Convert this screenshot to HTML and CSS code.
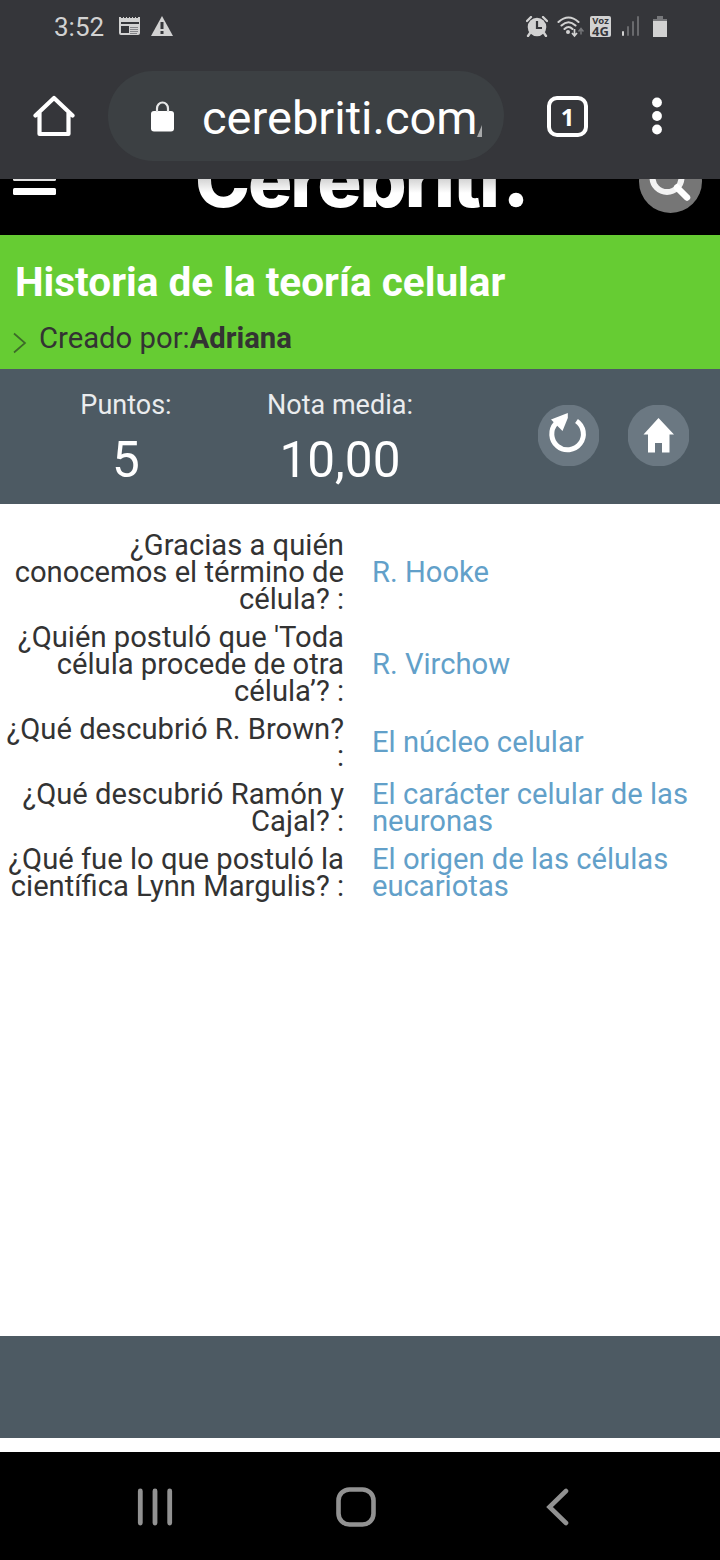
FILE: index.html
```
<!DOCTYPE html>
<html lang="es">
<head>
<meta charset="utf-8">
<title>Historia de la teoría celular</title>
<link rel="stylesheet" href="styles.css">
</head>
<body>
<div class="screen">
  <div class="status">
    <span class="clock">3:52</span>
    <svg class="ic-news" width="22" height="20" viewBox="0 0 22 20"><path fill="#d2d2d2" fill-rule="evenodd" d="M0 1h2v1h2V1h1v1h2V1h1v1h2V1h1v1h2V1h1v1h2V1h1v1h2V1h2v16q0 2-2 2H2q-2 0-2-2zM2 6v2h18V6zM2 10v7h8v-7z"/><path stroke="#85868a" d="M11 11.5h8M11 13.5h8M11 15.5h8M11 17.5h7"/></svg>
    <svg class="ic-warn" width="22" height="20" viewBox="0 0 22 20"><path d="M11 0l11 20H0z" fill="#d2d2d2"/><path d="M11 6v7M11 15v3" stroke="#35363a" stroke-width="3"/></svg>
    <svg class="ic-alarm" width="22" height="21" viewBox="0 0 22 21"><circle cx="11" cy="11" r="9.3" fill="#d2d2d2"/><path d="M1 5l4-4M21 5l-4-4M4 17l-2 3M18 17l2 3" stroke="#d2d2d2" stroke-width="2.3" stroke-linecap="round"/><path d="M11 5v7h5" fill="none" stroke="#35363a" stroke-width="2.2"/></svg>
    <svg class="ic-wifi" width="27" height="22" viewBox="0 0 27 22"><g fill="none" stroke="#d2d2d2" stroke-width="2.1" stroke-linecap="round"><path d="M1.500 6Q11.500-3 21.500 6M4.500 9.500Q11.500 3 18.500 9.500M7.500 13Q11.500 9 15.500 13"/></g><circle cx="11" cy="16" r="2" fill="#d2d2d2"/><path d="M17.500 13v7m-2.500-3l2.500 3 2.500-3" fill="none" stroke="#d2d2d2" stroke-width="1.700"/><path d="M24 18.500v-6m-2.500 3l2.500-3 2.500 3" fill="none" stroke="#76777a" stroke-width="1.500"/></svg>
    <div class="volte"><span class="voz">Voz</span><span class="g4">4G</span></div>
    <svg class="ic-signal" width="18" height="20" viewBox="0 0 18 20"><path stroke="#d2d2d2" stroke-width="2" stroke-linecap="round" d="M2 16v3"/><path stroke="#696a6d" stroke-width="2" stroke-linecap="round" d="M7 11v8M12 6v13M17 1v18"/></svg>
    <svg class="ic-batt" width="14" height="21" viewBox="0 0 14 21"><path d="M4 0h6v3h4v3H0V3h4z" fill="#77787b"/><path d="M0 5h14v16H0z" fill="#d2d2d2"/></svg>
  </div>
  <div class="toolbar">
    <svg class="ic-home" width="42" height="42" viewBox="0 0 42 42"><path d="M2.500 20.500L21 3l18.500 17.500M6.500 18v21h29V18" fill="none" stroke="#fff" stroke-width="4.200" stroke-linejoin="round" stroke-linecap="round"/></svg>
    <div class="url">
      <svg class="ic-lock" width="23" height="31" viewBox="0 0 23 31"><rect y="10" width="23" height="20.500" rx="3" fill="#fff"/><path d="M6 11V7.500a5.500 6 0 0 1 11 0V11" fill="none" stroke="#e8e9e9" stroke-width="2.200"/></svg>
      <span class="domain">cerebriti.com</span><svg class="slash" width="5" height="12" viewBox="0 0 5 12"><path d="M0 12L5 0v12z" fill="#a7a9aa"/></svg>
    </div>
    <div class="tabs">1</div>
    <svg class="ic-more" width="12" height="38" viewBox="0 0 12 38"><g fill="#fff"><circle cx="6" cy="5.500" r="4.900"/><circle cx="6" cy="19" r="4.900"/><circle cx="6" cy="32.500" r="4.900"/></g></svg>
  </div>
  <div class="sitebar">
    <svg class="burger" width="44" height="17" viewBox="0 0 44 17"><path d="M0 0h43v.5q0 1.500-1.500 1.500h-40Q0 2 0 .5z" fill="#e2e2e2"/><rect y="9" width="43" height="7" rx="1.500" fill="#fff"/></svg>
    <svg class="logo" width="340" height="56" viewBox="190 0 340 56"><defs><linearGradient id="lg" gradientUnits="userSpaceOnUse" x1="0" y1="0" x2="0" y2="14"><stop offset="0" stop-color="#d4d4d4"/><stop offset="1" stop-color="#fff"/></linearGradient></defs><text class="logotype" x="195" y="28" textLength="305" fill="url(#lg)">Cerebriti</text><circle cx="516" cy="21" r="7.300" fill="#fff"/></svg>
    <svg class="search" width="64" height="36" viewBox="0 0 64 36"><circle cx="31.500" cy="2.500" r="31.500" fill="#767676"/><circle cx="28" cy="-1.500" r="14.500" fill="none" stroke="#f2f2f2" stroke-width="6"/><path d="M38 8.500l10 10" stroke="#fff" stroke-width="6.500" stroke-linecap="round"/></svg>
  </div>
  <div class="title">
    <h1>Historia de la teoría celular</h1>
    <div class="author"><svg width="14" height="22" viewBox="0 0 14 22"><path d="M1 1.500L12 11 1 20.500" fill="none" stroke="#3d6b29" stroke-width="1.700"/></svg><span class="by">Creado por:<b>Adriana</b></span></div>
  </div>
  <div class="stats">
    <div class="stat points"><span class="label">Puntos:</span><span class="value">5</span></div>
    <div class="stat mean"><span class="label">Nota media:</span><span class="value">10,00</span></div>
    <svg class="round" width="61" height="61" viewBox="0 0 61 61"><circle cx="30.500" cy="30.500" r="31" fill="#6b7882"/><path d="M38.500 16A15.800 15.800 0 1 1 18 18.300" fill="none" stroke="#fff" stroke-width="5"/><path d="M13 14.500L29.800 8V13L24.500 26z" fill="#fff"/></svg>
    <svg class="round" width="61" height="61" viewBox="0 0 61 61"><circle cx="30.500" cy="30.500" r="31" fill="#6b7882"/><path d="M30.500 13L46 29.500h-4.500V47.500h-7.500V38h-7v9.500h-7V29.500H15.500z" fill="#fff"/></svg>
  </div>
  <div class="answers">
    <div class="row"><div class="q">¿Gracias a quién<br>conocemos el término de<br>célula? :</div><div class="a">R. Hooke</div></div>
    <div class="row"><div class="q">¿Quién postuló que 'Toda<br>célula procede de otra<br>célula’? :</div><div class="a">R. Virchow</div></div>
    <div class="row"><div class="q">¿Qué descubrió R. Brown?<br>:</div><div class="a nudge">El núcleo celular</div></div>
    <div class="row"><div class="q">¿Qué descubrió Ramón y<br>Cajal? :</div><div class="a">El carácter celular de las<br>neuronas</div></div>
    <div class="row"><div class="q">¿Qué fue lo que postuló la<br>científica Lynn Margulis? :</div><div class="a">El origen de las células<br>eucariotas</div></div>
  </div>
  <div class="band"></div>
  <div class="navbar">
    <svg width="38" height="40" viewBox="0 0 38 40"><path d="M4.300 4v32M19 4v32M33.700 4v32" stroke="#929292" stroke-width="4.800" stroke-linecap="round"/></svg>
    <svg width="40" height="40" viewBox="0 0 40 40"><rect x="2.500" y="2.500" width="35" height="35" rx="11" fill="none" stroke="#929292" stroke-width="4.600"/></svg>
    <svg width="24" height="40" viewBox="0 0 24 40"><path d="M20 4L3.500 20 20 36" fill="none" stroke="#929292" stroke-width="4.600" stroke-linecap="round"/></svg>
  </div>
</div>
</body>
</html>
```

FILE: styles.css
```
body { margin: 0; background: #fff; font-family: Roboto, sans-serif; }
svg { display: block; flex: none; }
.screen { width: 720px; height: 1560px; display: flex; flex-direction: column; overflow: hidden; }
.screen > div { flex: none; box-sizing: border-box; }

.status { height: 60px; background: #35363a; display: flex; align-items: flex-start; padding: 16px 53px 0 54px; }
.clock { width: 65px; font-size: 26px; line-height: 22px; color: #d2d2d2; }
.ic-warn { margin-left: 10px; }
.ic-alarm { margin-left: 353px; }
.ic-wifi { margin-left: 9px; }
.volte { width: 21px; height: 21px; margin-left: 6px; border-radius: 2px; background: #d2d2d2; color: #35363a; display: flex; flex-direction: column; align-items: center; font-family: "Open Sans", sans-serif; font-weight: 700; }
.voz { font-size: 9.5px; line-height: 10px; }
.g4 { font-size: 13px; line-height: 11px; }
.ic-signal { margin-left: 10px; }
.ic-batt { margin-left: 14px; }

.toolbar { height: 119px; background: #35363a; display: flex; align-items: flex-start; padding: 11px 0 0 33px; }
.ic-home { margin-top: 24px; }
.url { width: 396px; height: 90px; margin-left: 33px; border-radius: 45px; background: #3c4043; display: flex; align-items: flex-start; box-sizing: border-box; padding-left: 43px; }
.ic-lock { margin-top: 30px; }
.domain { width: 276px; margin-left: 28px; font-size: 47px; line-height: 94px; color: #fff; white-space: nowrap; }
.slash { margin-top: 54px; margin-left: -1px; }
.tabs { width: 33px; height: 33px; margin: 25px 0 0 43px; border: 4px solid #fff; border-radius: 10px; color: #fff; font: 700 24px/33px "Noto Sans", sans-serif; text-align: center; }
.ic-more { margin: 26px 0 0 63px; }

.sitebar { height: 56px; background: #000; display: flex; align-items: flex-start; padding-left: 13px; overflow: hidden; }
.logo { margin-left: 133px; }
.logotype { font-family: Inter, sans-serif; font-weight: 800; font-size: 74px; }
.search { margin-left: 109px; }

.title { height: 134px; background: #66cc33; padding: 24px 0 0 13px; }
.title h1 { margin: 0 0 0 2px; font-size: 40.5px; line-height: 46px; font-weight: 700; color: #fff; white-space: nowrap; }
.author { display: flex; align-items: flex-start; height: 40px; margin-top: 15px; color: #333; }
.author svg { margin-top: 12px; }
.by { margin-left: 12px; font-size: 29.25px; line-height: 36px; white-space: nowrap; }

.stats { height: 135px; background: #4d5a63; display: flex; align-items: flex-start; padding-top: 20px; }
.stat { display: flex; flex-direction: column; align-items: center; white-space: nowrap; }
.points { width: 252px; }
.mean { width: 176px; }
.label { font-size: 27px; line-height: 32px; color: #eaecee; }
.value { font-size: 49.5px; line-height: 58px; margin-top: 10px; color: #fff; }
.round { margin-top: 16px; margin-right: 29px; }
.mean + .round { margin-left: 110px; }

.answers { height: 832px; padding-top: 28px; display: flex; flex-direction: column; gap: 11px; font-size: 29.2px; line-height: 27px; }
.row { display: grid; grid-template-columns: 344px 348px; column-gap: 28px; align-items: center; white-space: nowrap; }
.q { text-align: right; color: #333; }
.a { color: #62a0c9; }
.nudge { padding-bottom: 1px; }

.band { height: 102px; background: #4d5a63; }
.navbar { height: 108px; margin-top: 14px; background: #000; display: flex; align-items: flex-start; padding: 35px 0 0 136px; }
.navbar svg + svg { margin-left: 162px; }
.navbar svg:last-child { margin-left: 170px; }
```
